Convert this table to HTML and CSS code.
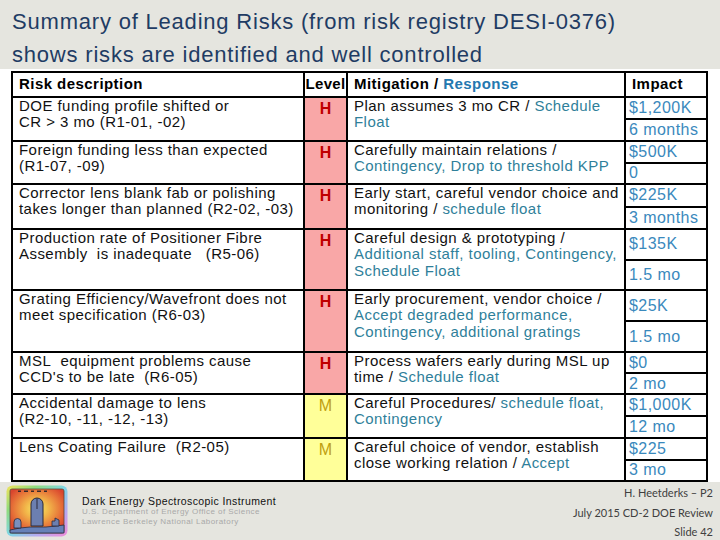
FILE: index.html
```html
<!DOCTYPE html>
<html>
<head>
<meta charset="utf-8">
<link rel="stylesheet" href="styles.css">
</head>
<body>
<div class="slide">
  <header class="title">Summary of Leading Risks (from risk registry DESI-0376)<br>shows risks are identified and well controlled</header>
  <section class="sheet">
    <div class="grid">
      <div class="cell hd">Risk description</div>
      <div class="cell hd lvl-hd">Level</div>
      <div class="cell hd">Mitigation / <span class="resp">Response</span></div>
      <div class="cell hd">Impact</div>

      <div class="cell">DOE funding profile shifted or<br>CR &gt; 3 mo (R1-01, -02)</div>
      <div class="lvl hi">H</div>
      <div class="cell">Plan assumes 3 mo CR / <span class="tl">Schedule<br>Float</span></div>
      <div class="imp"><div class="iv">$1,200K</div><div class="iv">6 months</div></div>

      <div class="cell">Foreign funding less than expected<br>(R1-07, -09)</div>
      <div class="lvl hi">H</div>
      <div class="cell">Carefully maintain relations /<br><span class="tl">Contingency, Drop to threshold KPP</span></div>
      <div class="imp"><div class="iv">$500K</div><div class="iv">0</div></div>

      <div class="cell">Corrector lens blank fab or polishing<br>takes longer than planned (R2-02, -03)</div>
      <div class="lvl hi">H</div>
      <div class="cell">Early start, careful vendor choice and<br>monitoring / <span class="tl">schedule float</span></div>
      <div class="imp"><div class="iv">$225K</div><div class="iv">3 months</div></div>

      <div class="cell">Production rate of Positioner Fibre<br>Assembly&nbsp; is inadequate &nbsp; (R5-06)</div>
      <div class="lvl hi">H</div>
      <div class="cell">Careful design &amp; prototyping /<br><span class="tl">Additional staff, tooling, Contingency,<br>Schedule Float</span></div>
      <div class="imp"><div class="iv">$135K</div><div class="iv">1.5 mo</div></div>

      <div class="cell">Grating Efficiency/Wavefront does not<br>meet specification (R6-03)</div>
      <div class="lvl hi">H</div>
      <div class="cell">Early procurement, vendor choice /<br><span class="tl">Accept degraded performance,<br>Contingency, additional gratings</span></div>
      <div class="imp"><div class="iv">$25K</div><div class="iv">1.5 mo</div></div>

      <div class="cell">MSL&nbsp; equipment problems cause<br>CCD's to be late&nbsp; (R6-05)</div>
      <div class="lvl hi">H</div>
      <div class="cell">Process wafers early during MSL up<br>time / <span class="tl">Schedule float</span></div>
      <div class="imp"><div class="iv">$0</div><div class="iv">2 mo</div></div>

      <div class="cell">Accidental damage to lens<br>(R2-10, -11, -12, -13)</div>
      <div class="lvl med">M</div>
      <div class="cell">Careful Procedures/ <span class="tl">schedule float,<br>Contingency</span></div>
      <div class="imp"><div class="iv">$1,000K</div><div class="iv">12 mo</div></div>

      <div class="cell">Lens Coating Failure&nbsp; (R2-05)</div>
      <div class="lvl med">M</div>
      <div class="cell">Careful choice of vendor, establish<br>close working relation / <span class="tl">Accept</span></div>
      <div class="imp"><div class="iv">$225</div><div class="iv">3 mo</div></div>
    </div>
  </section>
  <footer class="foot">
    <svg class="logo" width="62" height="52" viewBox="0 0 62 52">
      <defs>
        <linearGradient id="rb" x1="0" y1="0" x2="1" y2="1">
          <stop offset="0" stop-color="#f3e35a"/>
          <stop offset="0.25" stop-color="#8fdc7c"/>
          <stop offset="0.5" stop-color="#7fd6e6"/>
          <stop offset="0.75" stop-color="#b7a8f0"/>
          <stop offset="1" stop-color="#f08ad8"/>
        </linearGradient>
        <radialGradient id="glow" cx="0.5" cy="0.45" r="0.6">
          <stop offset="0" stop-color="#f6ec6a"/>
          <stop offset="0.35" stop-color="#f2b84a"/>
          <stop offset="0.7" stop-color="#e8793a"/>
          <stop offset="1" stop-color="#d9452e"/>
        </radialGradient>
      </defs>
      <rect x="0.5" y="0.5" width="61" height="51" rx="6" fill="url(#rb)"/>
      <rect x="4" y="4" width="54" height="44" rx="2" fill="url(#glow)" stroke="#5a4a3a" stroke-width="0.8"/>
      <g fill="#3a2a2a">
        <rect x="12" y="5.5" width="3" height="1.5"/>
        <rect x="18" y="5.5" width="4" height="1.5"/>
        <rect x="25" y="5.5" width="3" height="1.5"/>
        <rect x="31" y="5.5" width="4" height="1.5"/>
        <rect x="38" y="5.5" width="3" height="1.5"/>
      </g>
      <path d="M25 41 V19 a6 6 0 0 1 12 0 V41 Z" fill="#6c7fb0" stroke="#2a2a3a" stroke-width="1"/>
      <path d="M31 13.5 V24" stroke="#2a2a3a" stroke-width="1"/>
      <path d="M4 45 L14 43 L24 42 L40 42 L50 41 L58 40 V48 H4 Z" fill="#6680b8" stroke="#2a2a3a" stroke-width="0.8"/>
      <path d="M8 43 V37 a3.5 3.5 0 0 1 7 0 V43 Z" fill="#7a8fbf" stroke="#2a2a3a" stroke-width="0.8"/>
      <path d="M46 41 V36 H49 V33 L53 35 V41 Z" fill="#6c7fb0" stroke="#2a2a3a" stroke-width="0.8"/>
    </svg>
    <div class="org">
      <div class="org-name">Dark Energy Spectroscopic Instrument</div>
      <div class="org-sub">U.S. Department of Energy Office of Science</div>
      <div class="org-sub">Lawrence Berkeley National Laboratory</div>
    </div>
    <div class="meta">
      <div>H. Heetderks – P2</div>
      <div>July 2015 CD-2 DOE Review</div>
      <div>Slide 42</div>
    </div>
  </footer>
</div>
</body>
</html>
```

FILE: styles.css
```css
html, body {
  margin: 0;
  padding: 0;
}
body {
  width: 720px;
  height: 540px;
  overflow: hidden;
  background: #e5e5df;
  font-family: "Liberation Sans", Arial, sans-serif;
  color: #000;
}
.slide {
  width: 720px;
  height: 540px;
  display: flex;
  flex-direction: column;
}
.title {
  box-sizing: border-box;
  height: 69px;
  padding: 5px 0 0 12px;
  font-size: 22px;
  line-height: 33px;
  letter-spacing: 0.8px;
  color: #1f3c64;
  white-space: nowrap;
}
.sheet {
  box-sizing: border-box;
  height: 413px;
  padding: 2px 0 0 11px;
  background: #fff;
}
.grid {
  display: grid;
  width: max-content;
  grid-template-columns: 290px 41px 276px 80px;
  grid-template-rows: 23px 42px 41px 43px 59px 60px 40px 42px 41px;
  gap: 2px;
  background: #000;
  border: 2px solid #000;
}
.cell {
  background: #fff;
  padding: 0 6px;
  font-size: 15px;
  line-height: 16.3px;
  letter-spacing: 0.45px;
  white-space: nowrap;
  color: #111;
}
.hd {
  font-weight: bold;
  padding-top: 3px;
  color: #000;
}
.lvl-hd {
  padding: 3px 0 0;
  text-align: center;
  letter-spacing: 0.3px;
}
.resp {
  color: #2478b0;
}
.tl {
  color: #2f7f9a;
}
.lvl {
  text-align: center;
  padding-top: 3px;
  font-size: 16px;
  line-height: 16px;
}
.hi {
  background: #f9a7a7;
  color: #c00000;
  font-weight: bold;
}
.med {
  background: #ffff99;
  color: #bfa010;
}
.imp {
  display: grid;
  grid-template-rows: 1fr 1fr;
  gap: 2px;
  background: #000;
}
.iv {
  background: #fff;
  display: flex;
  align-items: center;
  padding-left: 3px;
  font-size: 16px;
  letter-spacing: 0.45px;
  color: #3a89bd;
  white-space: nowrap;
}
.foot {
  flex: 1;
  display: flex;
  align-items: flex-start;
  padding: 3px 7px 0 6px;
}
.logo {
  display: block;
  flex: none;
}
.org {
  margin: 10px 0 0 14px;
}
.org-name {
  font-size: 10.5px;
  line-height: 12px;
  letter-spacing: 0.4px;
  color: #111;
}
.org-sub {
  font-size: 8px;
  line-height: 9.8px;
  letter-spacing: 0.45px;
  color: #a9a9a9;
}
.meta {
  margin: -2px 0 0 auto;
  text-align: right;
  font-family: Lato, "Liberation Sans", sans-serif;
  font-size: 11px;
  line-height: 19.5px;
  color: #404040;
}
```
